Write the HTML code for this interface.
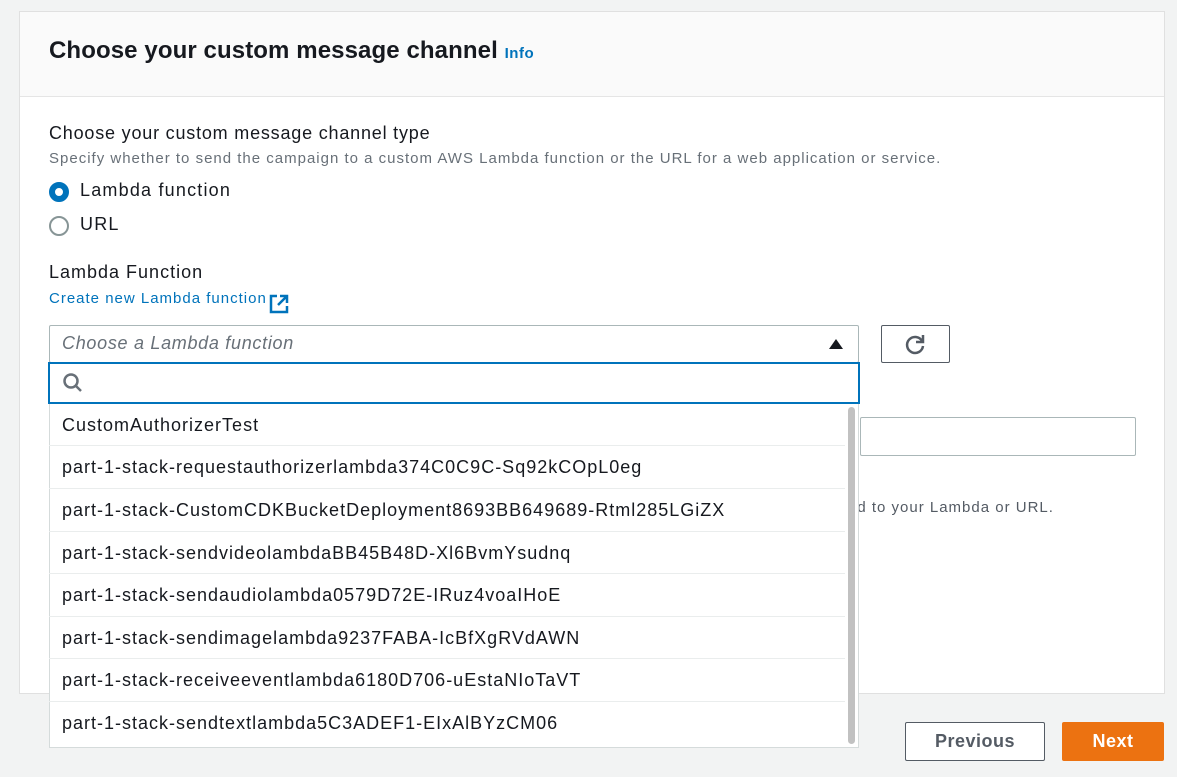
<!DOCTYPE html>
<html><head><meta charset="utf-8"><style>
*{box-sizing:border-box;margin:0;padding:0}
body{width:1177px;height:777px;background:#f2f3f3;font-family:"Liberation Sans",sans-serif;color:#16191f;position:relative;overflow:hidden;letter-spacing:0.9px}
.abs{position:absolute}
.card{left:19px;top:11px;width:1146px;height:683px;background:#fff;border:1px solid #e0e0e0}
.hdr{left:20px;top:12px;width:1144px;height:85px;background:#fafafa;border-bottom:1px solid #e5e5e5}
.t{white-space:nowrap}
</style></head><body>
<div class="abs card"></div>
<div class="abs hdr"></div>
<div class="abs t" style="left:49px;top:37px;font-size:24px;font-weight:bold;letter-spacing:0.1px">Choose your custom message channel <span style="font-size:15px;color:#0073bb;letter-spacing:0.5px">Info</span></div>
<div class="abs t" style="left:49px;top:123px;font-size:18px;letter-spacing:0.8px">Choose your custom message channel type</div>
<div class="abs t" style="left:49px;top:150px;font-size:15px;color:#687078;letter-spacing:1px">Specify whether to send the campaign to a custom AWS Lambda function or the URL for a web application or service.</div>
<div class="abs" style="left:49px;top:182px;width:20px;height:20px;border-radius:50%;border:6px solid #0073bb;background:#fff"></div>
<div class="abs t" style="left:80px;top:180px;font-size:18px;letter-spacing:1.2px">Lambda function</div>
<div class="abs" style="left:49px;top:216px;width:20px;height:20px;border-radius:50%;border:2px solid #879596;background:#fff"></div>
<div class="abs t" style="left:80px;top:214px;font-size:18px;letter-spacing:1.2px">URL</div>
<div class="abs t" style="left:49px;top:262px;font-size:18px;letter-spacing:1px">Lambda Function</div>
<div class="abs t" style="left:49px;top:290px;font-size:15px;color:#0073bb;letter-spacing:1px">Create new Lambda function</div>
<svg class="abs" style="left:268px;top:293px" width="22" height="22" viewBox="0 0 22 22"><path d="M9 3H3v16h16v-6M12 3h7v7M19 3L10 12" fill="none" stroke="#0073bb" stroke-width="2.5"/></svg>
<div class="abs" style="left:860px;top:417px;width:276px;height:39px;border:1px solid #aab7b8;border-radius:2px;background:#fff"></div>
<div class="abs t" style="left:848px;top:499px;font-size:15px;color:#545b64;letter-spacing:1px">nd to your Lambda or URL.</div>
<div class="abs" style="left:49px;top:325px;width:810px;height:38px;border:1px solid #aab7b8;border-radius:2px;background:#fff"></div>
<div class="abs t" style="left:62px;top:333px;font-size:18px;font-style:italic;color:#687078;letter-spacing:0.7px">Choose a Lambda function</div>
<svg class="abs" style="left:828px;top:338px" width="16" height="12"><path d="M1 11L8 1L15 11Z" fill="#16191f"/></svg>
<div class="abs" style="left:881px;top:325px;width:69px;height:38px;border:1px solid #545b64;border-radius:2px;background:#fff"></div>
<svg class="abs" style="left:903px;top:332px" width="24" height="24" viewBox="0 0 24 24"><path d="M19 9A8 8 0 1 0 20 14" fill="none" stroke="#545b64" stroke-width="2.5"/><path d="M20 3v7h-7" fill="none" stroke="#545b64" stroke-width="2.5"/></svg>
<div class="abs" style="left:49px;top:404px;width:810px;height:344px;background:#fff;border:1px solid #d5dbdb;border-top:none"></div>
<div class="abs" style="left:48px;top:362px;width:812px;height:42px;border:2px solid #0073bb;background:#fff"></div>
<svg class="abs" style="left:62px;top:372px" width="22" height="22" viewBox="0 0 22 22"><circle cx="9" cy="9" r="6.5" fill="none" stroke="#687078" stroke-width="2.5"/><path d="M14 14l5 5" stroke="#687078" stroke-width="2.5"/></svg>
<div class="abs" style="left:848px;top:407px;width:7px;height:337px;background:#c1c1c1;border-radius:4px"></div>
<div class="abs t" style="left:49px;top:404px;width:796px;font-size:18px;letter-spacing:1px">
<div style="height:42px;line-height:42px;padding-left:13px;border-bottom:1px solid #eaeded">CustomAuthorizerTest</div>
<div style="height:43px;line-height:42px;padding-left:13px;border-bottom:1px solid #eaeded">part-1-stack-requestauthorizerlambda374C0C9C-Sq92kCOpL0eg</div>
<div style="height:43px;line-height:42px;padding-left:13px;border-bottom:1px solid #eaeded">part-1-stack-CustomCDKBucketDeployment8693BB649689-Rtml285LGiZX</div>
<div style="height:42px;line-height:42px;padding-left:13px;border-bottom:1px solid #eaeded">part-1-stack-sendvideolambdaBB45B48D-Xl6BvmYsudnq</div>
<div style="height:43px;line-height:42px;padding-left:13px;border-bottom:1px solid #eaeded">part-1-stack-sendaudiolambda0579D72E-IRuz4voaIHoE</div>
<div style="height:42px;line-height:42px;padding-left:13px;border-bottom:1px solid #eaeded">part-1-stack-sendimagelambda9237FABA-IcBfXgRVdAWN</div>
<div style="height:43px;line-height:42px;padding-left:13px;border-bottom:1px solid #eaeded">part-1-stack-receiveeventlambda6180D706-uEstaNIoTaVT</div>
<div style="height:43px;line-height:42px;padding-left:13px">part-1-stack-sendtextlambda5C3ADEF1-EIxAlBYzCM06</div>
</div>
<div class="abs" style="left:905px;top:722px;width:140px;height:39px;border:1px solid #545b64;border-radius:2px;background:#fff;text-align:center;line-height:37px;font-size:18px;font-weight:bold;color:#545b64;letter-spacing:0.5px">Previous</div>
<div class="abs" style="left:1062px;top:722px;width:102px;height:39px;border-radius:2px;background:#ec7211;text-align:center;line-height:39px;font-size:18px;font-weight:bold;color:#fff;letter-spacing:0.5px">Next</div>
</body></html>
